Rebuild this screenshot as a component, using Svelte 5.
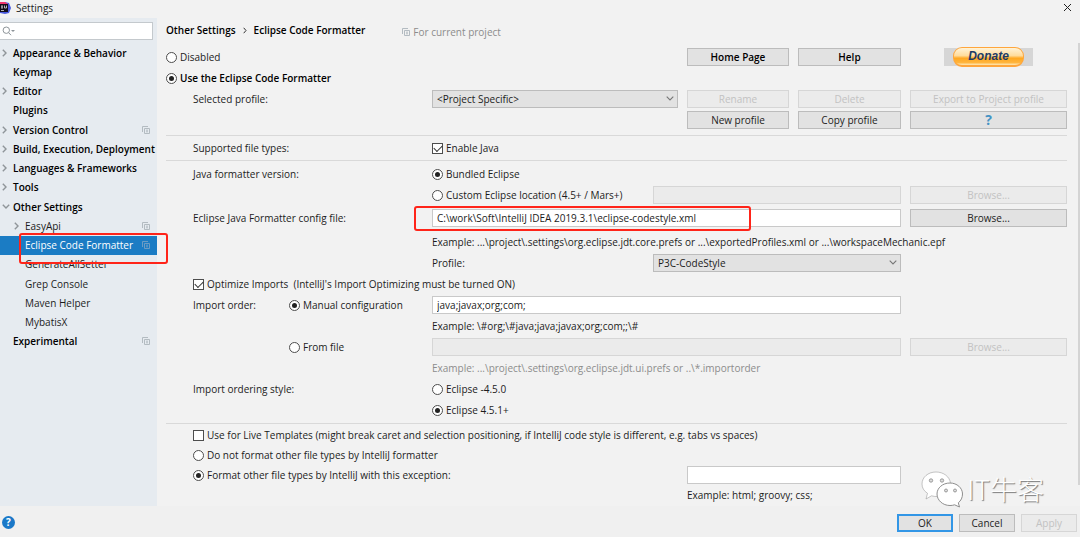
<script>
  let tree = [
    { name: "Appearance & Behavior", arrow: "right" },
    { name: "Keymap" },
    { name: "Editor", arrow: "right" },
    { name: "Plugins" },
    { name: "Version Control", arrow: "right", copy: true },
    { name: "Build, Execution, Deployment", arrow: "right" },
    { name: "Languages & Frameworks", arrow: "right" },
    { name: "Tools", arrow: "right" },
    { name: "Other Settings", arrow: "down" },
    { name: "EasyApi", arrow: "right", copy: true, sub: true },
    { name: "Eclipse Code Formatter", copy: true, sub: true },
    { name: "GenerateAllSetter", sub: true },
    { name: "Grep Console", sub: true },
    { name: "Maven Helper", sub: true },
    { name: "MybatisX", sub: true },
    { name: "Experimental", copy: true },
  ];
  let selected = "Eclipse Code Formatter";

  let mode = "use";
  let enableJava = true;
  let version = "bundled";
  let configFile = "C:\\work\\Soft\\IntelliJ IDEA 2019.3.1\\eclipse-codestyle.xml";
  let optimizeImports = true;
  let orderFrom = "manual";
  let importOrder = "java;javax;org;com;";
  let ordering = "4.5.1";
  let liveTemplates = false;
  let otherTypes = "format";

  const exampleConfig = "Example: ...\\project\\.settings\\org.eclipse.jdt.core.prefs or ...\\exportedProfiles.xml or ...\\workspaceMechanic.epf";
  const exampleOrder = "Example: \\#org;\\#java;java;javax;org;com;;\\#";
  const exampleFile = "Example: ...\\project\\.settings\\org.eclipse.jdt.ui.prefs or ..\\*.importorder";
</script>

{#snippet copyIcon()}
  <svg class="copy" viewBox="0 0 8 8" width="8" height="8" aria-hidden="true">
    <path d="M.5 6V.5H6M2.5 2.5h5v5h-5zM4 4.2h2M4 5.8h2" fill="none" stroke="currentColor" />
  </svg>
{/snippet}

{#snippet chevron()}
  <svg class="chevron" viewBox="0 0 8 5" width="8" height="5" aria-hidden="true">
    <path d="M.7.7L4 4 7.3.7" fill="none" stroke="#777" stroke-width="1.1" />
  </svg>
{/snippet}

<div class="dialog">
  <header class="titlebar">
    <svg class="logo" viewBox="0 0 11 12" width="11" height="12" aria-hidden="true">
      <path d="M0 1l5-1 4 1 2 5-2 5-4 1-5-1z" fill="#4b5be0" />
      <path d="M0 0h5l3 2v3H0z" fill="#f0356b" />
      <path d="M0 2h8v8H0z" fill="#120d18" />
      <path d="M1 4h2M2 4v2M1 6h2M4.500 3.500v2.500h2v-2.500M1 8.500h3" fill="none" stroke="#ddd" stroke-width=".8" />
    </svg>
    <span>Settings</span>
    <button class="close" aria-label="Close">
      <svg viewBox="0 0 9 9" width="9" height="9"><path d="M1 1l7 7M8 1L1 8" stroke="#222" fill="none" /></svg>
    </button>
  </header>

  <div class="body">
    <aside class="sidebar">
      <div class="search">
        <svg viewBox="0 0 13 10" width="13" height="10" aria-hidden="true">
          <circle cx="4.3" cy="4.2" r="3.2" fill="none" stroke="#8d9499" />
          <path d="M6.6 6.6L9 9.2" stroke="#8d9499" fill="none" />
          <path d="M9 4h4l-2 2z" fill="#8d9499" />
        </svg>
        <input type="text" aria-label="Search settings" />
      </div>
      <ul class="tree">
        {#each tree as item}
          <li class:sub={item.sub} class:selected={item.name === selected}>
            <span class="arrow">
              {#if item.arrow === "right"}
                <svg viewBox="0 0 5 8" width="5" height="8"><path d="M.8.8L4 4 .8 7.2" fill="none" stroke="#8f9599" stroke-width="1.4" /></svg>
              {:else if item.arrow === "down"}
                <svg viewBox="0 0 8 5" width="8" height="5"><path d="M.8.8L4 4 7.2.8" fill="none" stroke="#8f9599" stroke-width="1.4" /></svg>
              {/if}
            </span>
            <span class="name">{item.name}</span>
            {#if item.copy}{@render copyIcon()}{/if}
            {#if item.name === selected}<span class="mark"></span>{/if}
          </li>
        {/each}
      </ul>
    </aside>

    <main>
      <div class="crumbs">
        <b>Other Settings</b>
        <svg viewBox="0 0 4 7" width="4" height="7" aria-hidden="true"><path d="M.7.8L3 3.5.7 6.2" fill="none" stroke="#333" /></svg>
        <b>Eclipse Code Formatter</b>
        <span class="scope">{@render copyIcon()} For current project</span>
      </div>

      <section>
        <div class="row top">
          <label class="check span2"><input type="radio" bind:group={mode} value="disabled" />Disabled</label>
          <button class="strong">Home Page</button>
          <button class="strong">Help</button>
          <button class="donate"><span>Donate</span></button>
        </div>
        <div class="row top">
          <label class="check span2 bold"><input type="radio" bind:group={mode} value="use" />Use the Eclipse Code Formatter</label>
        </div>
        <div class="row">
          <label for="profile">Selected profile:</label>
          <div class="select">
            <select id="profile"><option>&lt;Project Specific&gt;</option></select>
            {@render chevron()}
          </div>
          <button disabled>Rename</button>
          <button disabled>Delete</button>
          <button disabled>Export to Project profile</button>
        </div>
        <div class="row">
          <span class="span2"></span>
          <button>New profile</button>
          <button>Copy profile</button>
          <button class="question">?</button>
        </div>
      </section>

      <section>
        <div class="row">
          <span>Supported file types:</span>
          <label class="check"><input type="checkbox" bind:checked={enableJava} />Enable Java</label>
        </div>
      </section>

      <section>
        <div class="row">
          <span>Java formatter version:</span>
          <label class="check"><input type="radio" bind:group={version} value="bundled" />Bundled Eclipse</label>
        </div>
        <div class="row">
          <span></span>
          <div class="wide split">
            <label class="check"><input type="radio" bind:group={version} value="custom" />Custom Eclipse location (4.5+ / Mars+)</label>
            <input type="text" aria-label="Custom Eclipse location" disabled />
          </div>
          <button disabled>Browse...</button>
        </div>
        <div class="row tall">
          <label for="config">Eclipse Java Formatter config file:</label>
          <div class="wide marked">
            <input id="config" type="text" bind:value={configFile} />
            <span class="mark"></span>
          </div>
          <button>Browse...</button>
        </div>
        <div class="row hint">
          <span></span>
          <span class="rest">{exampleConfig}</span>
        </div>
        <div class="row">
          <span></span>
          <div class="wide split">
            <label for="style">Profile:</label>
            <div class="select">
              <select id="style"><option>P3C-CodeStyle</option></select>
              {@render chevron()}
            </div>
          </div>
        </div>
        <div class="row">
          <label class="check rest"><input type="checkbox" bind:checked={optimizeImports} />Optimize Imports&nbsp; (IntelliJ's Import Optimizing must be turned ON)</label>
        </div>
        <div class="row">
          <div class="order">
            <span>Import order:</span>
            <label class="check"><input type="radio" bind:group={orderFrom} value="manual" />Manual configuration</label>
          </div>
          <input class="wide" type="text" aria-label="Import order" bind:value={importOrder} />
        </div>
        <div class="row">
          <span></span>
          <span class="rest">{exampleOrder}</span>
        </div>
        <div class="row">
          <div class="order">
            <span></span>
            <label class="check"><input type="radio" bind:group={orderFrom} value="file" />From file</label>
          </div>
          <input class="wide" type="text" aria-label="Import order file" disabled />
          <button disabled>Browse...</button>
        </div>
        <div class="row">
          <span></span>
          <span class="rest muted">{exampleFile}</span>
        </div>
        <div class="row">
          <span>Import ordering style:</span>
          <label class="check"><input type="radio" bind:group={ordering} value="4.5.0" />Eclipse -4.5.0</label>
        </div>
        <div class="row">
          <span></span>
          <label class="check"><input type="radio" bind:group={ordering} value="4.5.1" />Eclipse 4.5.1+</label>
        </div>
      </section>

      <section class="others">
        <div class="row">
          <label class="check rest"><input type="checkbox" bind:checked={liveTemplates} />Use for Live Templates (might break caret and selection positioning, if IntelliJ code style is different, e.g. tabs vs spaces)</label>
        </div>
        <div class="row">
          <label class="check rest"><input type="radio" bind:group={otherTypes} value="skip" />Do not format other file types by IntelliJ formatter</label>
        </div>
        <div class="row">
          <label class="check span2"><input type="radio" bind:group={otherTypes} value="format" />Format other file types by IntelliJ with this exception:</label>
          <input class="span2" type="text" aria-label="Exceptions" />
        </div>
        <div class="row">
          <span class="span2"></span>
          <span class="span2">Example: html; groovy; css;</span>
        </div>
      </section>
      <div class="scrollbar"></div>
    </main>
  </div>

  <footer>
    <button class="help" aria-label="Help">?</button>
    <button class="ok">OK</button>
    <button>Cancel</button>
    <button disabled>Apply</button>
  </footer>

  <div class="watermark">
    <svg viewBox="0 0 44 38" width="44" height="38" aria-hidden="true">
      <g fill="#fff" stroke="#8e8e8e" stroke-width="1">
        <path d="M16 2C8 2 2 7.300 2 14c0 4 2 7 5.500 9.300L6 29l5.500-3.200c2 .6 4 .8 6 .7C28 26 31 19 30.500 13 29.500 6.500 23.500 2 16 2z" stroke-opacity=".5" />
        <path d="M30 13c-7.500 0-13 5-13 11s5.500 11.500 13 11.500c1.600 0 3.200-.2 4.600-.7L39.500 37l-1.200-4.200C41 30.700 42.500 27.500 42.500 24 42.500 18 37 13 30 13z" />
      </g>
      <g fill="#ddd" stroke="#888" stroke-width=".8">
        <circle cx="11" cy="10.500" r="1.700" /><circle cx="22" cy="10.500" r="1.700" />
        <circle cx="26" cy="20.500" r="1.500" /><circle cx="35" cy="20.500" r="1.500" />
      </g>
    </svg>
    <span>IT牛客</span>
  </div>
</div>

<style>
  :global(body) {
    margin: 0;
    background: #f2f2f2;
  }
  .dialog {
    position: relative;
    display: flex;
    flex-direction: column;
    min-height: 100vh;
    font-family: "Open Sans", "Noto Sans CJK SC", sans-serif;
    font-size: 10px;
    line-height: 14px;
    color: #1c1c1c;
    white-space: nowrap;
  }
  .dialog * {
    box-sizing: border-box;
  }
  button,
  input,
  select {
    font: inherit;
    color: inherit;
    margin: 0;
    min-width: 0;
  }
  b {
    font-weight: 600;
  }

  .titlebar {
    display: flex;
    align-items: center;
    height: 18px;
    padding: 0 8px 3px 0;
  }
  .logo {
    margin-right: 5px;
  }
  .close {
    display: flex;
    margin-left: auto;
    padding: 0;
    border: none;
    background: none;
  }

  .body {
    display: flex;
    flex: 1;
  }
  .sidebar {
    flex: none;
    width: 157px;
    padding-top: 4px;
    background: #e6ebf0;
  }
  .search {
    display: flex;
    align-items: center;
    height: 18px;
    margin-right: 4px;
    padding-left: 2px;
    border: 1px solid #c4c9cd;
    border-left: none;
    background: #fff;
  }
  .search input {
    flex: 1;
    height: 14px;
    border: none;
    background: none;
  }
  .tree {
    display: grid;
    grid-template-columns: 100%;
    grid-auto-rows: 1fr;
    height: 308px;
    margin: 3px 0 0;
    padding: 0;
    list-style: none;
  }
  .tree li {
    position: relative;
    display: flex;
    align-items: center;
    padding: 0 7px 0 2px;
    font-weight: 600;
    color: #000;
  }
  .tree .sub {
    padding-left: 14px;
    font-weight: normal;
    color: #1c1c1c;
  }
  .tree .selected {
    background: #1b7cc4;
    color: #fff;
  }
  .arrow {
    display: flex;
    flex: none;
    width: 11px;
  }
  .name {
    flex: 1;
  }
  .copy {
    flex: none;
    color: #b3bbc1;
  }
  .selected .copy {
    color: #6c9cc4;
  }
  .mark {
    position: absolute;
    border: 2px solid #ff2419;
    border-radius: 3px;
    pointer-events: none;
    z-index: 1;
  }
  .tree .mark {
    inset: -3px -11px -9px 19px;
  }
  .marked .mark {
    inset: -3px 150px -4px -18px;
  }

  main {
    position: relative;
    flex: 1;
    min-width: 0;
    padding: 0 13px 0 9px;
  }
  .crumbs {
    display: flex;
    align-items: center;
    gap: 7px;
    height: 24px;
    margin-bottom: 6px;
    color: #000;
  }
  .scope {
    display: flex;
    align-items: center;
    gap: 3px;
    margin-left: 30px;
    padding-top: 4px;
    color: #8c8c8c;
  }
  section {
    display: flex;
    flex-direction: column;
    gap: 3px;
    padding: 4px 0;
    border-bottom: 1px solid #d9d9d9;
  }
  section:first-of-type {
    padding: 0 0 6px;
  }
  section:nth-of-type(2) {
    padding: 3px 0;
  }
  .others {
    gap: 2px;
    padding: 2px 0;
    border: none;
  }
  .row {
    display: grid;
    grid-template-columns: 230px 1fr 102px 103px 157px;
    column-gap: 9px;
    align-items: center;
    height: 18px;
    padding-left: 27px;
  }
  .top {
    grid-template-columns: 257px 1fr 102px 103px 157px;
    padding-left: 0;
  }
  .tall {
    height: 22px;
  }
  .hint {
    height: 19px;
  }
  .span2 {
    grid-column: span 2;
  }
  .wide {
    grid-column: span 3;
  }
  .rest {
    grid-column-end: -1;
  }
  .rest:first-child {
    grid-column-start: 1;
  }
  .rest:nth-child(2) {
    grid-column-start: 2;
  }
  .muted {
    color: #8c8c8c;
  }
  .bold {
    font-weight: 600;
    color: #000;
  }
  .split {
    display: flex;
    align-items: center;
    justify-content: space-between;
  }
  .split > :last-child {
    flex: 0 0 248px;
  }
  .marked {
    position: relative;
    display: flex;
  }
  .marked input {
    flex: 1;
  }
  .order {
    display: grid;
    grid-template-columns: 96px 1fr;
  }

  .check {
    display: flex;
    align-items: center;
    gap: 3px;
  }
  .check input {
    display: grid;
    place-items: center;
    flex: none;
    appearance: none;
    width: 11px;
    height: 11px;
    border: 1px solid #4d4d4d;
    background: #fff;
  }
  .check input[type="radio"] {
    border-radius: 50%;
  }
  .check input[type="radio"]:checked::before {
    content: "";
    width: 5px;
    height: 5px;
    border-radius: 50%;
    background: #222;
  }
  .check input[type="checkbox"]:checked::before {
    content: "";
    width: 7px;
    height: 4px;
    margin-bottom: 2px;
    border: solid #333;
    border-width: 0 0 1px 1px;
    transform: rotate(-45deg);
  }

  input[type="text"] {
    padding: 0 4px;
    outline: none;
  }
  .row input[type="text"] {
    height: 18px;
    border: 1px solid #c9c9c9;
    background: #fff;
  }
  .row input[type="text"]:disabled {
    border-color: #d6d6d6;
    background: #ebebeb;
  }
  .select {
    position: relative;
    display: flex;
  }
  select {
    appearance: none;
    width: 100%;
    height: 18px;
    padding: 0 16px 0 4px;
    border: 1px solid #bcbcbc;
    border-radius: 0;
    background: #e2e2e2;
  }
  .chevron {
    position: absolute;
    right: 4px;
    top: 6px;
    pointer-events: none;
  }

  .row button,
  footer button {
    height: 18px;
    padding: 0;
    border: 1px solid #bcbcbc;
    background: #e2e2e2;
  }
  .row button:last-child {
    grid-column: 5;
  }
  .row button:disabled,
  footer button:disabled {
    border-color: #d6d6d6;
    background: #ebebeb;
    color: #c2c2c2;
  }
  .row .strong {
    font-weight: 600;
    color: #000;
  }
  .row .question {
    font-size: 14px;
    font-weight: bold;
    color: #4593c4;
  }
  .row .donate {
    display: flex;
    align-items: center;
    justify-content: center;
    justify-self: center;
    width: 89px;
    border: none;
    background: #d6d6d6;
  }
  .donate span {
    flex: none;
    width: 71px;
    height: 20px;
    border: 1px solid #ffa63c;
    border-bottom-width: 2px;
    border-radius: 9px;
    background: linear-gradient(#fff3d8, #ffdc9c 45%, #ffa821 60%, #ffb43c 85%, #ffe9b8);
    font-family: "Liberation Sans", sans-serif;
    font-size: 12px;
    font-weight: bold;
    font-style: italic;
    line-height: 17px;
    color: #1d3b66;
  }
  .scrollbar {
    position: absolute;
    top: 25px;
    right: 0;
    bottom: 21px;
    width: 2px;
    background: #d4d4d4;
  }

  footer {
    display: flex;
    align-items: center;
    gap: 6px;
    height: 33px;
    padding: 0 3px 0 2px;
    background: #f0f0f0;
  }
  footer button {
    width: 56px;
  }
  footer .ok {
    border: 2px solid #3296e6;
  }
  footer .help {
    width: 13px;
    height: 13px;
    margin-right: auto;
    border: none;
    border-radius: 50%;
    background: #1a78c8;
    font-weight: bold;
    line-height: 13px;
    color: #fff;
  }
  .watermark {
    position: absolute;
    right: 36px;
    bottom: 31px;
    display: flex;
    align-items: center;
    gap: 3px;
    font-family: "Noto Sans CJK SC", sans-serif;
    font-size: 27px;
    font-weight: 300;
    line-height: 38px;
    color: #fff;
    text-shadow: 1px 1px 1px #777;
    pointer-events: none;
  }
</style>
